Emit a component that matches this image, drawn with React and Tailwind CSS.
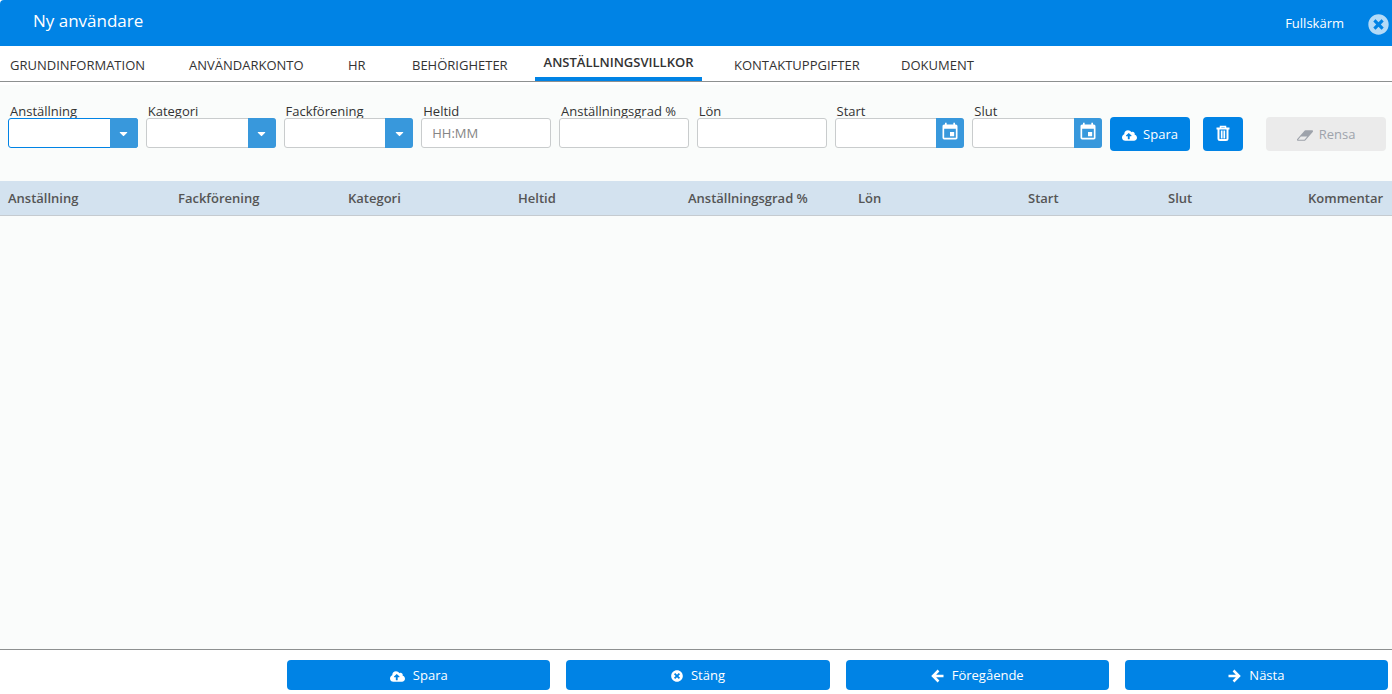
import React from "react";
import { FaCaretDown, FaCloudUploadAlt, FaTimesCircle } from "react-icons/fa";
import { MdEvent } from "react-icons/md";

const tabs = [
  { name: "GRUNDINFORMATION", width: "w-[179px]" },
  { name: "ANVÄNDARKONTO", width: "w-[159px]" },
  { name: "HR", width: "w-[64px]" },
  { name: "BEHÖRIGHETER", width: "w-[131px]" },
  { name: "ANSTÄLLNINGSVILLKOR", width: "w-[167px]", active: true },
  { name: "KONTAKTUPPGIFTER", width: "w-[167px]" },
  { name: "DOKUMENT", width: "w-[100px]" },
];

const fields = [
  { id: "anstallning", label: "Anställning", type: "select", focused: true },
  { id: "kategori", label: "Kategori", type: "select" },
  { id: "fackforening", label: "Fackförening", type: "select" },
  { id: "heltid", label: "Heltid", placeholder: "HH:MM" },
  { id: "grad", label: "Anställningsgrad %" },
  { id: "lon", label: "Lön" },
  { id: "start", label: "Start", type: "date" },
  { id: "slut", label: "Slut", type: "date" },
];

const columns = [
  { name: "Anställning", width: "w-[170px]" },
  { name: "Fackförening", width: "w-[170px]" },
  { name: "Kategori", width: "w-[170px]" },
  { name: "Heltid", width: "w-[170px]" },
  { name: "Anställningsgrad %", width: "w-[170px]" },
  { name: "Lön", width: "w-[170px]" },
  { name: "Start", width: "w-[140px]" },
  { name: "Slut", width: "w-[140px]" },
  { name: "Kommentar", width: "w-auto" },
];

function TrashIcon() {
  return (
    <svg viewBox="0 0 14 16" className="h-4 w-[14px]" fill="none" stroke="currentColor">
      <path d="M4.500 3V1.500h5V3" strokeWidth="1.500" />
      <path d="M0.500 3.500h13" strokeWidth="2" />
      <path d="M2.500 4v9.500a1.500 1.500 0 0 0 1.500 1.500h6a1.500 1.500 0 0 0 1.500-1.500V4" strokeWidth="2" />
      <path d="M5.500 5.500v8M8.500 5.500v8" strokeWidth="1.300" />
      <path d="M7 5.500v8" strokeWidth="1" />
    </svg>
  );
}

function EraserIcon() {
  return (
    <svg viewBox="0 0 1920 1792" className="h-[15px] w-4" fill="currentColor">
      <path d="M896 1408l336-384H464l-336 384h768zm1013-1077q15 34 9.500 71.500T1888 468l-896 1024q-38 44-96 44H128q-38 0-69.500-20.500T11 1461q-15-34-9.500-71.500T32 1324L928 300q38-44 96-44h768q38 0 69.500 20.500T1909 331z" />
    </svg>
  );
}

function ArrowIcon({ right }) {
  return (
    <svg
      viewBox="0 0 13 14"
      className={right ? "h-[14px] w-[13px] rotate-180" : "h-[14px] w-[13px]"}
      fill="none"
      stroke="currentColor"
      strokeWidth="2.500"
    >
      <path d="M7.500 1.500L2 7l5.500 5.500M2.500 7H12.500" />
    </svg>
  );
}

function Field({ field }) {
  const border = field.focused ? "border-[#0083e5]" : "border-[#c9cccd]";

  return (
    <div className="min-w-0 flex-1">
      <label
        htmlFor={field.id}
        className="block h-4 whitespace-nowrap pl-0.5 text-[13px] leading-[18px] text-[#333]"
      >
        {field.label}
      </label>
      <div className="relative flex h-[30px]">
        {field.type === "select" ? (
          <>
            <select
              id={field.id}
              className={`w-full appearance-none rounded-[3px] border bg-white px-2.5 text-[13px] outline-none ${border}`}
            >
              <option></option>
            </select>
            <span className="pointer-events-none absolute inset-y-0 right-0 flex w-7 items-center justify-center rounded-r-[3px] bg-[#3898dc] text-white">
              <FaCaretDown size={13} />
            </span>
          </>
        ) : (
          <input
            id={field.id}
            type="text"
            placeholder={field.placeholder}
            className={`w-full min-w-0 rounded-[3px] border bg-white px-2.5 pt-0.5 text-[13px] outline-none placeholder:text-[#858585] ${border}`}
          />
        )}
        {field.type === "date" && (
          <button
            type="button"
            aria-label={field.label}
            className="absolute inset-y-0 right-0 flex w-7 items-center justify-center rounded-r-[3px] bg-[#3898dc] pb-0.5 text-white"
          >
            <MdEvent size={20} />
          </button>
        )}
      </div>
    </div>
  );
}

function FooterButton({ icon, children }) {
  return (
    <button
      type="button"
      className="flex h-[30px] items-center justify-center gap-2 rounded bg-[#0083e5] pt-0.5 text-[13px] text-white"
    >
      {icon}
      {children}
    </button>
  );
}

export default function App() {
  return (
    <div className="flex min-h-screen flex-col bg-white font-['Open_Sans','Noto_Sans',sans-serif] text-[#333]">
      {/* TITLE BAR */}
      <header className="flex h-[46px] items-center justify-between rounded-tl bg-[#0083e5] pl-[33px] pr-[3px] text-white">
        <h1 className="pb-1 text-[17px]">Ny användare</h1>
        <div className="flex items-center gap-6 pt-0.5">
          <button type="button" className="text-[13px]">
            Fullskärm
          </button>
          <button type="button" aria-label="Stäng" className="text-[#b3daf7]">
            <FaTimesCircle size={21} />
          </button>
        </div>
      </header>

      {/* TABS */}
      <nav className="flex h-9 border-b border-[#8d9090] pl-0.5 text-[13px] leading-5">
        {tabs.map((tab) =>
          tab.active ? (
            <a
              key={tab.name}
              href="#"
              className={`mr-6 border-b-4 border-[#0083e5] pt-1.5 text-center font-semibold ${tab.width}`}
            >
              {tab.name}
            </a>
          ) : (
            <a key={tab.name} href="#" className={`px-2 pt-[9px] ${tab.width}`}>
              {tab.name}
            </a>
          )
        )}
      </nav>

      <main className="mt-[3px] flex-1 bg-[#fafcfb]">
        {/* FORM ROW */}
        <form className="flex items-end gap-2 pb-[30px] pl-2 pr-1.5 pt-[17px]">
          <div className="flex flex-1 gap-2 pb-[3px]">
            {fields.map((f) => (
              <Field key={f.id} field={f} />
            ))}
          </div>
          <div className="flex">
            <button
              type="button"
              className="flex h-[34px] w-20 items-center justify-center gap-1.5 rounded bg-[#0083e5] pt-0.5 text-[13px] text-white"
            >
              <FaCloudUploadAlt size={15} />
              Spara
            </button>
            <button
              type="button"
              aria-label="Ta bort"
              className="ml-[13px] flex h-[34px] w-10 items-center justify-center rounded bg-[#0083e5] pb-0.5 text-white"
            >
              <TrashIcon />
            </button>
            <button
              type="button"
              disabled
              className="ml-[23px] flex h-[34px] w-[120px] items-center justify-center gap-1.5 rounded bg-[#ebebeb] pt-0.5 text-[13px] text-[#9ea3ab]"
            >
              <EraserIcon />
              Rensa
            </button>
          </div>
        </form>

        {/* TABLE */}
        <table className="w-full table-fixed text-left text-[13px] text-[#555]">
          <thead>
            <tr className="h-[34px] border-b border-[#c5cbd0] bg-[#d3e2ef]">
              {columns.map((c) => (
                <th key={c.name} className={`whitespace-nowrap px-2 pt-0.5 font-semibold ${c.width}`}>
                  {c.name}
                </th>
              ))}
            </tr>
          </thead>
          <tbody></tbody>
        </table>
      </main>

      {/* BOTTOM BUTTONS */}
      <footer className="grid grid-cols-5 gap-4 border-t border-[#8d9090] bg-white pb-1 pl-2 pr-1 pt-2.5">
        <span></span>
        <FooterButton icon={<FaCloudUploadAlt size={15} />}>Spara</FooterButton>
        <FooterButton icon={<FaTimesCircle size={12} />}>Stäng</FooterButton>
        <FooterButton icon={<ArrowIcon />}>Föregående</FooterButton>
        <FooterButton icon={<ArrowIcon right />}>Nästa</FooterButton>
      </footer>
    </div>
  );
}
